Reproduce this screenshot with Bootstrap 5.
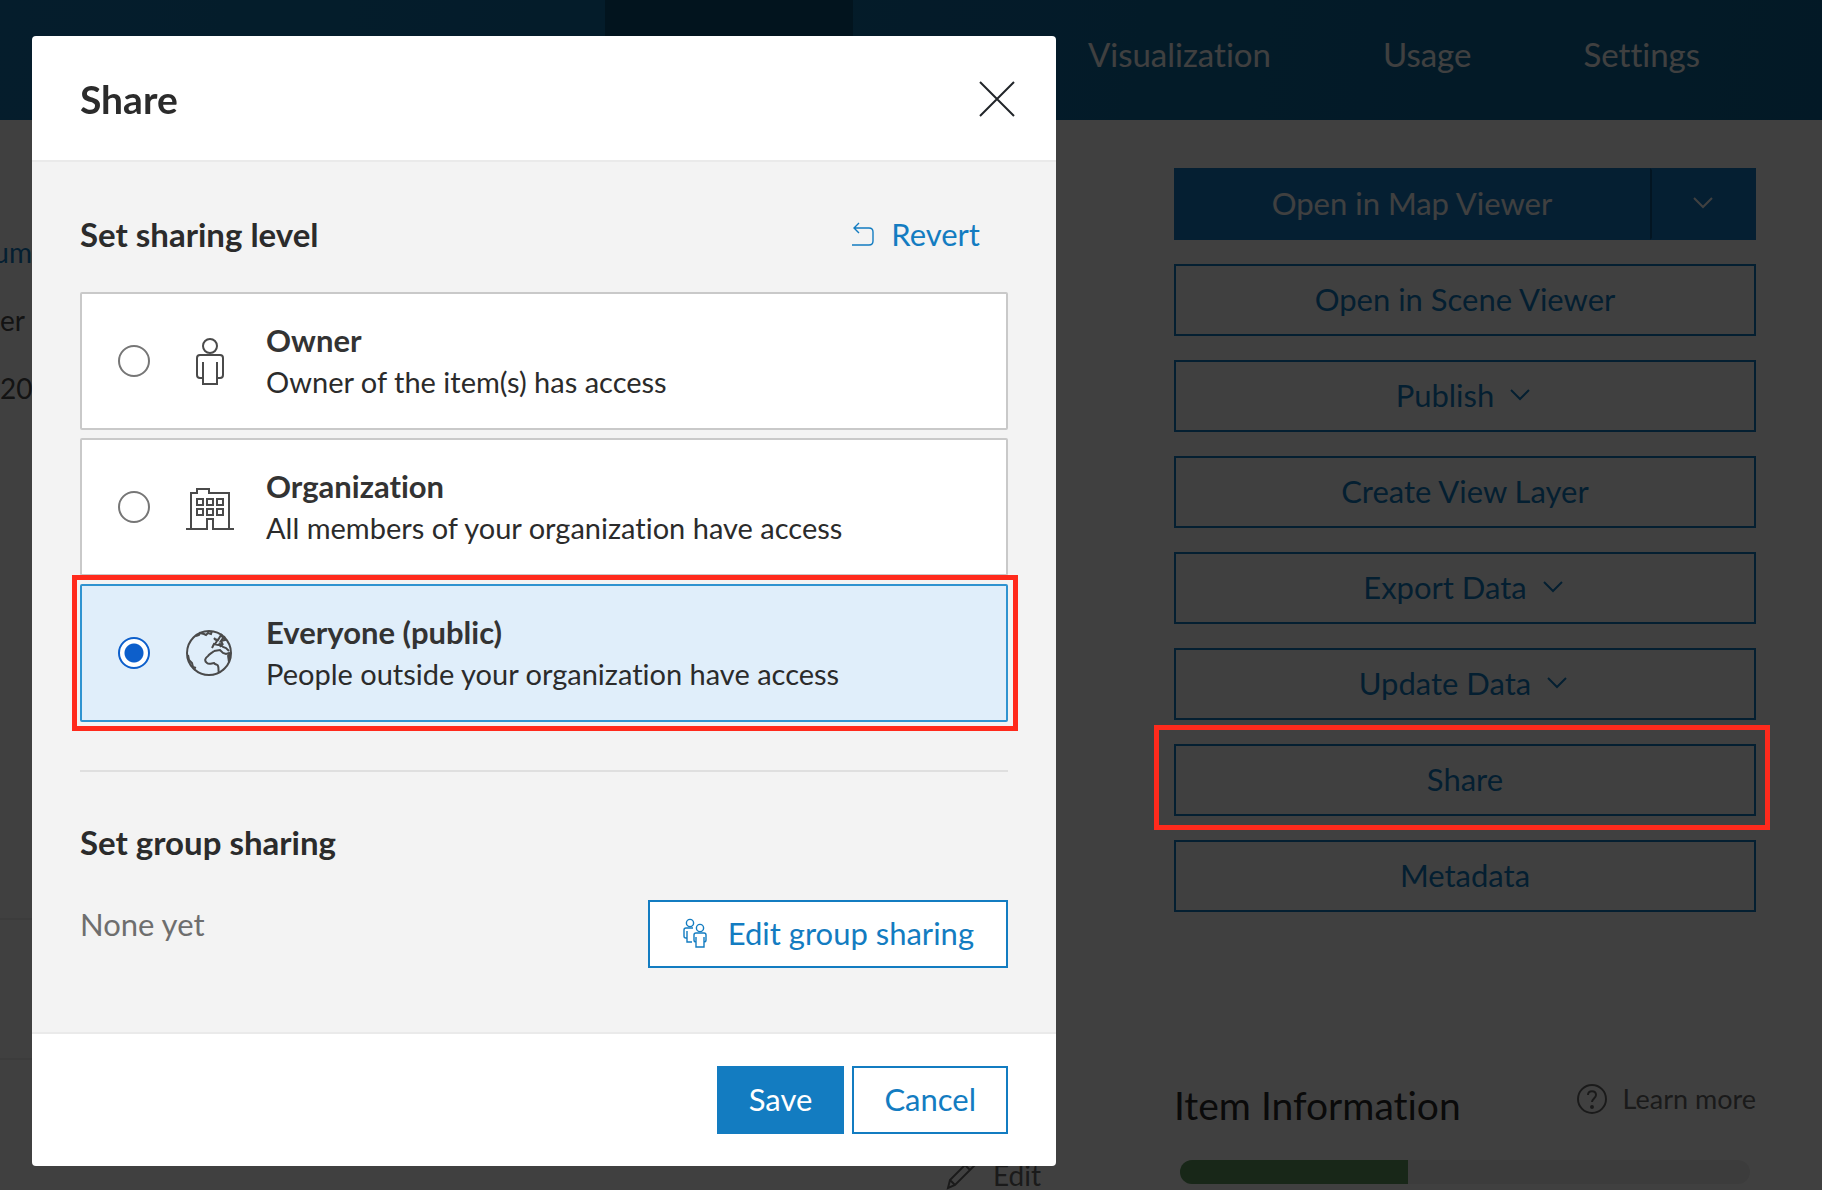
<!DOCTYPE html>
<html lang="en">
<head>
<meta charset="utf-8">
<meta name="viewport" content="width=device-width, initial-scale=1">
<title>Share item</title>
<link href="https://cdn.jsdelivr.net/npm/bootstrap@5.3.0/dist/css/bootstrap.min.css" rel="stylesheet">
<style>
  :root { --brand: #137cc1; --ink: #2b2b2b; --callout: #ff2a1c; }
  body { font-family: Lato, "Open Sans", sans-serif; font-size: 31px; line-height: 42px; font-variant-ligatures: none; color: #4c4c4c; background: #fff; height: 100vh; overflow: hidden; }
  svg { fill: none; stroke: currentColor; flex-shrink: 0; }

  /* page header */
  .site-bar { height: 120px; padding-right: 74px; background: linear-gradient(100deg, #1476b0, #0c6698); }
  .site-tab { height: 120px; padding: 0 56px 12px; font-size: 33px; color: #fff; text-decoration: none; }
  .site-tab.current { width: 248px; background: #08507a; }
  .site-tab.plain { width: 179px; }

  /* item details behind the dialog */
  .details { margin-right: 118px; }
  .details-cell { width: 32px; height: 68px; font-size: 28px; }
  .details-cell.linkish { color: var(--brand); }
  .details-top { padding-top: 98px; height: 798px; }
  .details-rule { border-top: 2px solid #eee; height: 140px; }
  .details-edit { border-top: 2px solid #eee; padding: 94px 15px 0 0; }
  .details-edit a, .learn { color: #6a6a6a; text-decoration: none; }
  .details-edit a { font-size: 28px; }
  .side { width: 582px; margin-right: 66px; padding-top: 48px; }

  .btn { --bs-btn-border-radius: 0; --bs-btn-border-width: 2px; --bs-btn-padding-y: 0; font-size: 31px; line-height: 42px; }
  .btn-brand { --bs-btn-bg: var(--brand); --bs-btn-color: #fff; --bs-btn-border-color: var(--brand); }
  .btn-line { --bs-btn-bg: #fff; --bs-btn-color: var(--brand); --bs-btn-border-color: var(--brand); }
  .btn-brand, .btn-line { padding-bottom: 2px; }
  .side .btn { height: 72px; --bs-btn-bg: transparent; }
  .side .btn-brand { background: #147bc8; border-color: #147bc8; }
  .side .split { width: 106px; flex: none; border-left-color: #0c5688; }
  .side-info { margin-top: 168px; }
  .side-info h2 { font-size: 39px; line-height: 50px; font-weight: 400; color: var(--ink); }
  .learn { font-size: 27px; line-height: 38px; }
  .progress { height: 24px; border-radius: 12px; margin: 30px 6px 0; background: #f0f0f0; }
  .progress-bar { background: #5f9a5f; }

  /* red call-out frames */
  .callout-frame { position: relative; }
  .callout-frame::after { content: ""; position: absolute; inset: -9px -10px -9px -8px; border: 5px solid var(--callout); z-index: 1060; pointer-events: none; }
  .side .callout-frame::after { inset: -19px -14px -14px -20px; }

  /* dialog */
  .modal-backdrop { opacity: .75; width: 100%; height: 100%; }
  .modal-dialog { max-width: 1024px; margin: 36px 32px; }
  .modal-content { border: 0; border-radius: 4px; color: var(--ink); }
  .modal-header { height: 126px; padding: 2px 40px 0 48px; border-bottom: 2px solid #eaeaea; }
  .modal-title { font-size: 39px; line-height: 48px; font-weight: 700; }
  .modal-body { background: #f3f3f3; padding: 48px 48px 64px; }
  .modal-footer { padding: 32px 48px; border-top: 2px solid #eaeaea; gap: 8px; }
  .modal-footer > * { margin: 0; }
  .modal .btn-brand, .modal .btn-line { height: 68px; --bs-btn-padding-x: 30px; }
  .modal .btn-group-edit { --bs-btn-padding-x: 32px; gap: 20px; }
  .section-title { font-size: 33px; line-height: 40px; font-weight: 700; }
  .level-head { height: 48px; margin-bottom: 34px; padding-right: 28px; }
  .btn-revert { --bs-btn-color: var(--brand); --bs-btn-padding-x: 0; }
  .level { height: 138px; padding-left: 36px; background: #fff; border: 2px solid #c9c9c9; border-radius: 2px; cursor: pointer; }
  .level.chosen { background: #e0eefa; border-color: #2f93d0; }
  .level svg { margin: 0 32px 0 36px; color: #4a4a4a; }
  .level .form-check-input { width: 32px; height: 32px; margin: 0; border: 2px solid #767676; flex-shrink: 0; }
  .level .form-check-input:checked { border-color: #0d5fcb; background: #fff radial-gradient(circle, #0d5fcb 9px, transparent 10px); }
  .level-name { font-weight: 700; color: #333; }
  .level-text { padding-bottom: 1px; }
  .level-note { font-size: 29px; }
  .split-line { height: 2px; margin: 48px 0 50px; border: 0; background: #dfdfdf; opacity: 1; }
  .group-row { margin-top: 38px; }
  .none-yet { line-height: 48px; color: #6e6e6e; }
</style>
</head>
<body>
<header class="site-bar">
  <nav class="d-flex justify-content-end" aria-label="Item">
    <a class="site-tab current" href="#" aria-label="Overview"></a>
    <a class="site-tab plain" href="#" aria-label="Data"></a>
    <a class="site-tab d-flex align-items-center" href="#">Visualization</a>
    <a class="site-tab d-flex align-items-center" href="#">Usage</a>
    <a class="site-tab d-flex align-items-center pe-0 me-5" href="#">Settings</a>
  </nav>
</header>

<main class="d-flex">
  <section class="details flex-fill">
    <div class="details-top">
      <div class="details-cell linkish d-flex align-items-center justify-content-end">um</div>
      <div class="details-cell d-flex align-items-center">er</div>
      <div class="details-cell d-flex align-items-center">20</div>
    </div>
    <div class="details-rule"></div>
    <div class="details-edit d-flex justify-content-end">
      <a class="d-flex align-items-center gap-3" href="#">
        <svg width="32" height="32" viewBox="0 0 32 32" stroke-width="2"><path d="M3 29l2-8L24 2l5 5L10 26zM5 21l5 5M20 6l5 5"/></svg>Edit</a>
    </div>
  </section>

  <aside class="side">
    <div class="d-flex flex-column gap-4">
      <div class="d-flex">
        <button class="btn btn-brand flex-fill" type="button">Open in Map Viewer</button>
        <button class="btn btn-brand split" type="button" aria-label="More viewers"><svg class="d-block mx-auto" width="20" height="12" viewBox="0 0 20 12" stroke-width="2"><path d="M1 1l9 9 9-9"/></svg></button>
      </div>
      <button class="btn btn-line" type="button">Open in Scene Viewer</button>
      <button class="btn btn-line d-flex align-items-center justify-content-center" type="button">Publish<svg class="ms-3 me-1" width="20" height="12" viewBox="0 0 20 12" stroke-width="2"><path d="M1 1l9 9 9-9"/></svg></button>
      <button class="btn btn-line" type="button">Create View Layer</button>
      <button class="btn btn-line d-flex align-items-center justify-content-center" type="button">Export Data<svg class="ms-3 me-1" width="20" height="12" viewBox="0 0 20 12" stroke-width="2"><path d="M1 1l9 9 9-9"/></svg></button>
      <button class="btn btn-line d-flex align-items-center justify-content-center" type="button">Update Data<svg class="ms-3 me-1" width="20" height="12" viewBox="0 0 20 12" stroke-width="2"><path d="M1 1l9 9 9-9"/></svg></button>
      <div class="callout-frame d-grid"><button class="btn btn-line" type="button">Share</button></div>
      <button class="btn btn-line" type="button">Metadata</button>
    </div>
    <div class="side-info d-flex justify-content-between align-items-start">
      <h2 class="m-0">Item Information</h2>
      <a class="learn d-flex align-items-center" href="#"><svg class="me-3" width="30" height="30" viewBox="0 0 30 30" stroke-width="2"><circle cx="15" cy="15" r="14"/><path d="M11 11c0-5 8-5 8 0 0 3-4 4-4 7"/><circle cx="15" cy="23" r="1"/></svg>Learn more</a>
    </div>
    <div class="progress" role="progressbar" aria-label="Item information" aria-valuenow="40" aria-valuemin="0" aria-valuemax="100">
      <div class="progress-bar" style="width:40%"></div>
    </div>
  </aside>
</main>

<div class="modal-backdrop"></div>
<div class="modal d-block" role="dialog" aria-modal="true" aria-labelledby="share-title">
  <div class="modal-dialog">
    <form class="modal-content">
      <div class="modal-header">
        <h1 class="modal-title" id="share-title">Share</h1>
        <button class="btn p-0 border-0" type="button" aria-label="Close"><svg class="d-block" width="38" height="38" viewBox="0 0 38 38" stroke="#111" stroke-width="2"><path d="M2 2l34 34M36 2L2 36"/></svg></button>
      </div>
      <div class="modal-body">
        <div class="level-head d-flex align-items-center justify-content-between">
          <h2 class="section-title m-0">Set sharing level</h2>
          <button class="btn btn-revert border-0 d-flex align-items-center" type="button"><svg class="me-3" width="24" height="24" viewBox="0 0 24 24" stroke-width="1.4"><path d="M8 1L3 6l5 5M3 6h15q4 0 4 4v9q0 4-4 4H1"/></svg>Revert</button>
        </div>
        <div class="d-flex flex-column gap-2">
          <label class="level d-flex align-items-center" for="lv-owner">
            <input class="form-check-input" type="radio" name="level" id="lv-owner">
            <svg width="48" height="48" viewBox="0 0 48 48" stroke-width="2"><circle cx="24" cy="9" r="7"/><path d="M17 41h-3q-3 0-3-3V21q0-3 3-3h20q3 0 3 3v17q0 3-3 3h-3M17 25v22h14V25"/></svg>
            <span class="level-text"><span class="level-name d-block">Owner</span><span class="level-note d-block">Owner of the item(s) has access</span></span>
          </label>
          <label class="level d-flex align-items-center" for="lv-org">
            <input class="form-check-input" type="radio" name="level" id="lv-org">
            <svg width="48" height="48" viewBox="0 0 48 48" stroke-width="2"><path d="M0 46h21V36h6v10h21M5 46V10h6V6h12v4h20v36M11 16h6v6h-6zM21 16h6v6h-6zM31 16h6v6h-6zM11 26h6v6h-6zM21 26h6v6h-6zM31 26h6v6h-6z"/></svg>
            <span class="level-text"><span class="level-name d-block">Organization</span><span class="level-note d-block">All members of your organization have access</span></span>
          </label>
          <div class="callout-frame">
            <label class="level chosen d-flex align-items-center" for="lv-all">
              <input class="form-check-input" type="radio" name="level" id="lv-all" checked>
              <svg width="48" height="48" viewBox="0 0 48 48" stroke-width="2"><circle cx="23" cy="24" r="22"/><path d="M10 7l3-1 1-2 4 1 2 1 2-2 3 1 1-3M2 26l1 5 3 3 1 4 3 1M28 22c-2 2-5 3-6 5-3 2-4 5-1 7 2 2 5 0 7 0 1 2 4 1 4 3 1 2 0 5 1 7M28 22l6-1 3 3 3 1 3-1 1 7M26 19l2-4 4 1 2-1 3 3 3 1 3 3M33 15l2 3M28 9l3 3-2 3M28 10l4 1 3-5M35 5l2 4-2 3 4-1-1-4M35 12l2 4"/><path d="M42 26l1 7"/></svg>
              <span class="level-text"><span class="level-name d-block">Everyone (public)</span><span class="level-note d-block">People outside your organization have access</span></span>
            </label>
          </div>
        </div>
        <hr class="split-line">
        <h2 class="section-title m-0">Set group sharing</h2>
        <div class="group-row d-flex justify-content-between align-items-start">
          <span class="none-yet">None yet</span>
          <button class="btn btn-line btn-group-edit d-flex align-items-center" type="button"><svg width="26" height="30" viewBox="0 0 26 30" stroke-width="1.4"><circle cx="8" cy="5" r="3.6"/><path d="M5 20H4q-2 0-2-2v-6q0-2 2-2h7M5 13v11h5"/><circle cx="18" cy="10" r="3.6"/><path d="M14 24q-2 0-2-2v-5q0-2 2-2h8q2 0 2 2v5q0 2-2 2M14 19v10h8V19"/></svg>Edit group sharing</button>
        </div>
      </div>
      <div class="modal-footer">
        <button class="btn btn-brand" type="button">Save</button>
        <button class="btn btn-line" type="button">Cancel</button>
      </div>
    </form>
  </div>
</div>
<script src="https://cdn.jsdelivr.net/npm/bootstrap@5.3.0/dist/js/bootstrap.bundle.min.js"></script>
</body>
</html>
